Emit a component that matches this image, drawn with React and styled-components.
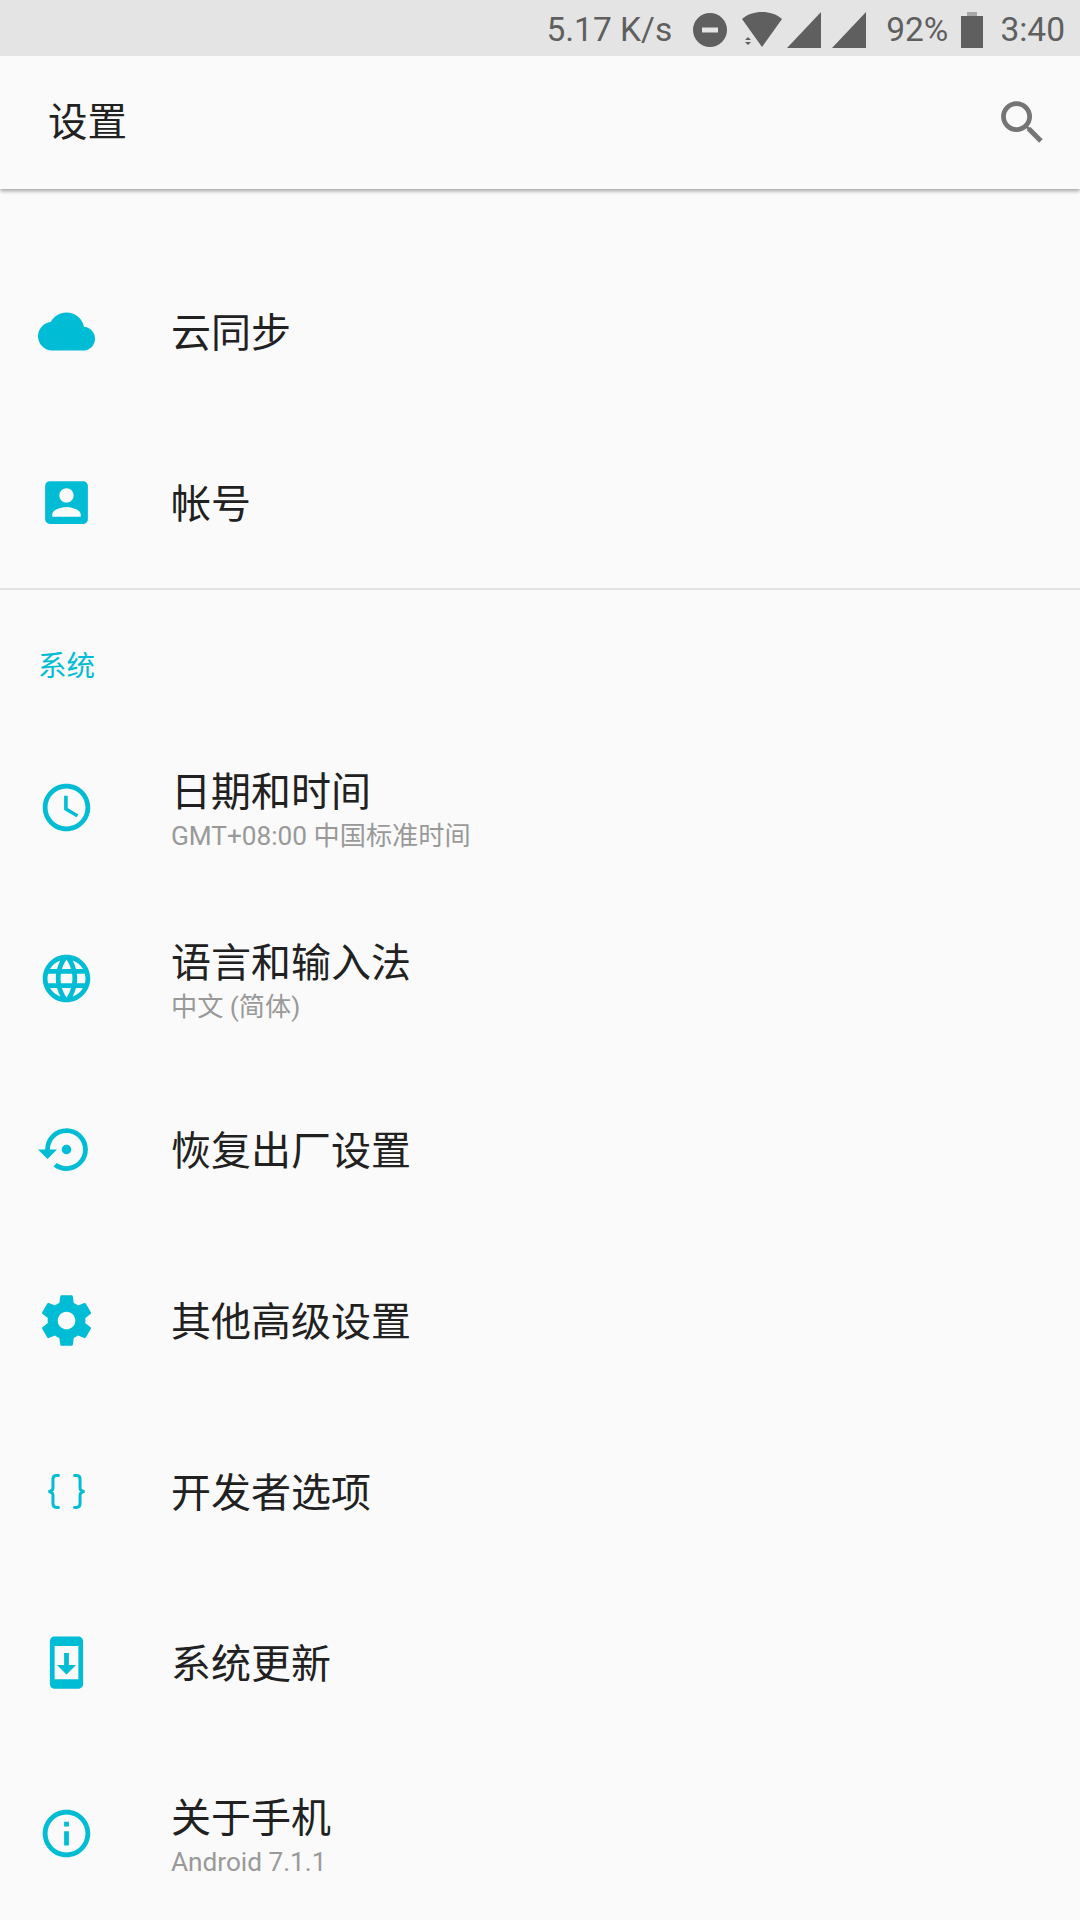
import React from "react";
import styled, { createGlobalStyle } from "styled-components";

const Global = createGlobalStyle`
  html, body { margin: 0; padding: 0; background: #fafafa; }
  body { font-family: Roboto, "Noto Sans CJK SC", sans-serif; }
`;
const Page = styled.div`
  width: 1080px;
  height: 1920px;
  overflow: hidden;
  background: #fafafa;
  display: flex;
  flex-direction: column;
`;
const StatusBar = styled.div`
  height: 56px;
  background: #e4e4e4;
  display: flex;
  align-items: center;
  justify-content: flex-end;
  padding-right: 15px;
  color: #5f5f5f;
  flex: none;
  position: relative;
  z-index: 1;
`;
const StatusText = styled.span`
  font: 400 33.5px/56px Roboto, sans-serif;
  margin-left: ${(p) => p.$ml || 0}px;
  margin-top: 4px;
`;
const StatusIcon = styled.svg`
  display: block;
  flex: none;
  fill: #5f5f5f;
  margin-left: ${(p) => p.$ml || 0}px;
  margin-top: 4px;
`;
const Toolbar = styled.header`
  height: 133px;
  flex: none;
  display: flex;
  align-items: center;
  justify-content: space-between;
  padding: 0 29px 0 48px;
  background: #fafafa;
  box-shadow: 0 2px 4px rgba(0, 0, 0, 0.36);
  position: relative;
`;
const Title = styled.h1`
  margin: 0 0 7px;
  font: 400 39.5px/46px "Noto Sans CJK SC", sans-serif;
  color: #212121;
`;
const SearchIcon = styled.svg`
  width: 57px;
  height: 57px;
  fill: #757575;
`;
const List = styled.main`
  flex: 1;
  padding-top: 57px;
`;
const Row = styled.div`
  height: 171px;
  display: flex;
  align-items: center;
  padding-left: 38px;
  box-sizing: border-box;
`;
const IconBox = styled.svg`
  width: 57px;
  height: 57px;
  flex: none;
  margin-right: 76px;
  fill: #00bcd4;
`;
const RowText = styled.div`
  display: flex;
  flex-direction: column;
`;
const RowTitle = styled.div`
  font: 400 40px/46px "Noto Sans CJK SC", sans-serif;
  color: #212121;
  padding-bottom: 3px;
`;
const RowSub = styled.div`
  font: 400 26.2px/32px Roboto, "Noto Sans CJK SC", sans-serif;
  color: #999999;
  margin: 5.5px 0 -2.5px;
`;
const Divider = styled.hr`
  margin: 0;
  border: 0;
  height: 2px;
  background: #e2e2e2;
`;
const Section = styled.div`
  height: 132px;
  box-sizing: border-box;
  display: flex;
  align-items: center;
  padding: 16px 0 0 38px;
  font: 400 28.5px/32px "Noto Sans CJK SC", sans-serif;
  color: #00bcd4;
`;

const icons = {
  cloud: <path d="M19.35 10.04A7.49 7.49 0 0 0 12 4C9.11 4 6.6 5.64 5.35 8.04A5.994 5.994 0 0 0 0 14c0 3.31 2.69 6 6 6h13c2.76 0 5-2.24 5-5 0-2.64-2.05-4.78-4.65-4.96z" />,
  account: <path d="M3 5v14a2 2 0 0 0 2 2h14c1.1 0 2-.9 2-2V5c0-1.1-.9-2-2-2H5a2 2 0 0 0-2 2zm12 4c0 1.66-1.34 3-3 3s-3-1.34-3-3 1.34-3 3-3 3 1.34 3 3zm-9 8c0-2 4-3.1 6-3.1s6 1.1 6 3.1v1H6v-1z" />,
  clock: <path d="M11.99 2C6.47 2 2 6.48 2 12s4.47 10 9.99 10C17.52 22 22 17.52 22 12S17.52 2 11.99 2zM12 20c-4.42 0-8-3.58-8-8s3.58-8 8-8 8 3.58 8 8-3.58 8-8 8zm.5-13H11v6l5.25 3.15.75-1.23-4.5-2.67z" />,
  globe: <path d="M11.99 2C6.47 2 2 6.48 2 12s4.47 10 9.99 10C17.52 22 22 17.52 22 12S17.52 2 11.99 2zm6.93 6h-2.95a15.65 15.65 0 0 0-1.38-3.56A8.03 8.03 0 0 1 18.92 8zM12 4.04c.83 1.2 1.48 2.53 1.91 3.96h-3.82c.43-1.43 1.08-2.76 1.91-3.96zM4.26 14C4.1 13.36 4 12.69 4 12s.1-1.36.26-2h3.38c-.08.66-.14 1.32-.14 2 0 .68.06 1.34.14 2H4.26zm.82 2h2.95c.32 1.25.78 2.45 1.38 3.56A7.987 7.987 0 0 1 5.08 16zm2.95-8H5.08a7.987 7.987 0 0 1 4.33-3.56A15.65 15.65 0 0 0 8.03 8zM12 19.96c-.83-1.2-1.48-2.53-1.91-3.96h3.82c-.43 1.43-1.08 2.76-1.91 3.96zM14.34 14H9.66c-.09-.66-.16-1.32-.16-2 0-.68.07-1.35.16-2h4.68c.09.65.16 1.32.16 2 0 .68-.07 1.34-.16 2zm.25 5.56c.6-1.11 1.06-2.31 1.38-3.56h2.95a8.03 8.03 0 0 1-4.33 3.56zM16.36 14c.08-.66.14-1.32.14-2 0-.68-.06-1.34-.14-2h3.38c.16.64.26 1.31.26 2s-.1 1.36-.26 2h-3.38z" />,
  restore: <path d="M14 12c0-1.1-.9-2-2-2s-2 .9-2 2 .9 2 2 2 2-.9 2-2zm-2-9a9 9 0 0 0-9 9H0l4 4 4-4H5c0-3.87 3.13-7 7-7s7 3.13 7 7-3.13 7-7 7c-1.51 0-2.91-.49-4.06-1.3l-1.42 1.44A8.9 8.9 0 0 0 12 21a9 9 0 0 0 0-18z" />,
  gear: <path d="M19.43 12.98c.04-.32.07-.64.07-.98s-.03-.66-.07-.98l2.11-1.65c.19-.15.24-.42.12-.64l-2-3.46c-.12-.22-.39-.3-.61-.22l-2.49 1c-.52-.4-1.08-.73-1.69-.98l-.38-2.65A.488.488 0 0 0 14 2h-4c-.25 0-.46.18-.49.42l-.38 2.65c-.61.25-1.17.59-1.69.98l-2.49-1c-.23-.09-.49 0-.61.22l-2 3.46c-.13.22-.07.49.12.64l2.11 1.65c-.04.32-.07.65-.07.98s.03.66.07.98l-2.11 1.65c-.19.15-.24.42-.12.64l2 3.46c.12.22.39.3.61.22l2.49-1c.52.4 1.08.73 1.69.98l.38 2.65c.03.24.24.42.49.42h4c.25 0 .46-.18.49-.42l.38-2.65c.61-.25 1.17-.59 1.69-.98l2.49 1c.23.09.49 0 .61-.22l2-3.46c.12-.22.07-.49-.12-.64l-2.11-1.65zM12 15.5c-1.93 0-3.5-1.57-3.5-3.5s1.57-3.5 3.5-3.5 3.5 1.57 3.5 3.5-1.57 3.5-3.5 3.5z" transform="translate(-.7 -.7) scale(1.06)" />,
  braces: <path fill="none" stroke="#00bcd4" strokeWidth="1.25" strokeLinecap="round" d="M8.6 5.3H7.8c-1 0-1.5.6-1.5 1.5v3.6c0 .9-.6 1.5-1.9 1.6 1.3.1 1.9.7 1.9 1.6v3.6c0 .9.5 1.5 1.5 1.5h.8M15.4 5.3h.8c1 0 1.5.6 1.5 1.5v3.6c0 .9.6 1.5 1.9 1.6-1.3.1-1.9.7-1.9 1.6v3.6c0 .9-.5 1.5-1.5 1.5h-.8" />,
  update: <path d="M17 1.01 7 1c-1.1 0-2 .9-2 2v18c0 1.1.9 2 2 2h10c1.1 0 2-.9 2-2V3c0-1.1-.9-1.99-2-1.99zM17 19H7V5h10v14zm-1-6h-3V8h-2v5H8l4 4 4-4z" />,
  info: <path d="M11 17h2v-6h-2v6zm1-15C6.48 2 2 6.48 2 12s4.48 10 10 10 10-4.48 10-10S17.52 2 12 2zm0 18c-4.41 0-8-3.59-8-8s3.59-8 8-8 8 3.59 8 8-3.59 8-8 8zM11 9h2V7h-2v2z" />,
};

const Item = ({ icon, title, sub }) => (
  <Row>
    <IconBox viewBox="0 0 24 24">{icons[icon]}</IconBox>
    <RowText>
      <RowTitle>{title}</RowTitle>
      {sub && <RowSub>{sub}</RowSub>}
    </RowText>
  </Row>
);

export default function App() {
  return (
    <Page>
      <Global />
      <StatusBar>
        <StatusText>5.17 K/s</StatusText>
        <StatusIcon $ml={20} width="36" height="36" viewBox="0 0 36 36">
          <path fillRule="evenodd" d="M18 1a17 17 0 1 0 0 34 17 17 0 0 0 0-34zM10 15.5h16v5H10z" />
        </StatusIcon>
        <StatusIcon $ml={12} width="44" height="38" viewBox="0 0 44 38">
          <path d="M2 8C8 3 14 1 22 1s14 2 20 7L22 36z" />
          <path d="M5 29l3-3 3 3zM5 31h6l-3 3z" />
        </StatusIcon>
        <StatusIcon $ml={2} width="36" height="38" viewBox="0 0 36 38">
          <path d="M1 37 35 1v36z" />
        </StatusIcon>
        <StatusIcon $ml={9} width="36" height="38" viewBox="0 0 36 38">
          <path d="M1 37 35 1v36z" />
        </StatusIcon>
        <StatusText $ml={19}>92%</StatusText>
        <StatusIcon $ml={13} width="22" height="38" viewBox="0 0 22 38">
          <path fill="#a8a8a8" d="M6 1h10v4H6z" />
          <path d="M0 5h22v32H0z" />
        </StatusIcon>
        <StatusText $ml={17}>3:40</StatusText>
      </StatusBar>
      <Toolbar>
        <Title>设置</Title>
        <SearchIcon viewBox="0 0 24 24">
          <path d="M15.5 14h-.79l-.28-.27A6.471 6.471 0 0 0 16 9.5 6.5 6.5 0 1 0 9.5 16c1.61 0 3.09-.59 4.23-1.57l.27.28v.79l5 4.99L20.49 19l-4.99-5zm-6 0C7.01 14 5 11.99 5 9.5S7.01 5 9.5 5 14 7.01 14 9.5 11.99 14 9.5 14z" />
        </SearchIcon>
      </Toolbar>
      <List>
        <Item icon="cloud" title="云同步" />
        <Item icon="account" title="帐号" />
        <Divider />
        <Section>系统</Section>
        <Item icon="clock" title="日期和时间" sub="GMT+08:00 中国标准时间" />
        <Item icon="globe" title="语言和输入法" sub="中文 (简体)" />
        <Item icon="restore" title="恢复出厂设置" />
        <Item icon="gear" title="其他高级设置" />
        <Item icon="braces" title="开发者选项" />
        <Item icon="update" title="系统更新" />
        <Item icon="info" title="关于手机" sub="Android 7.1.1" />
      </List>
    </Page>
  );
}
